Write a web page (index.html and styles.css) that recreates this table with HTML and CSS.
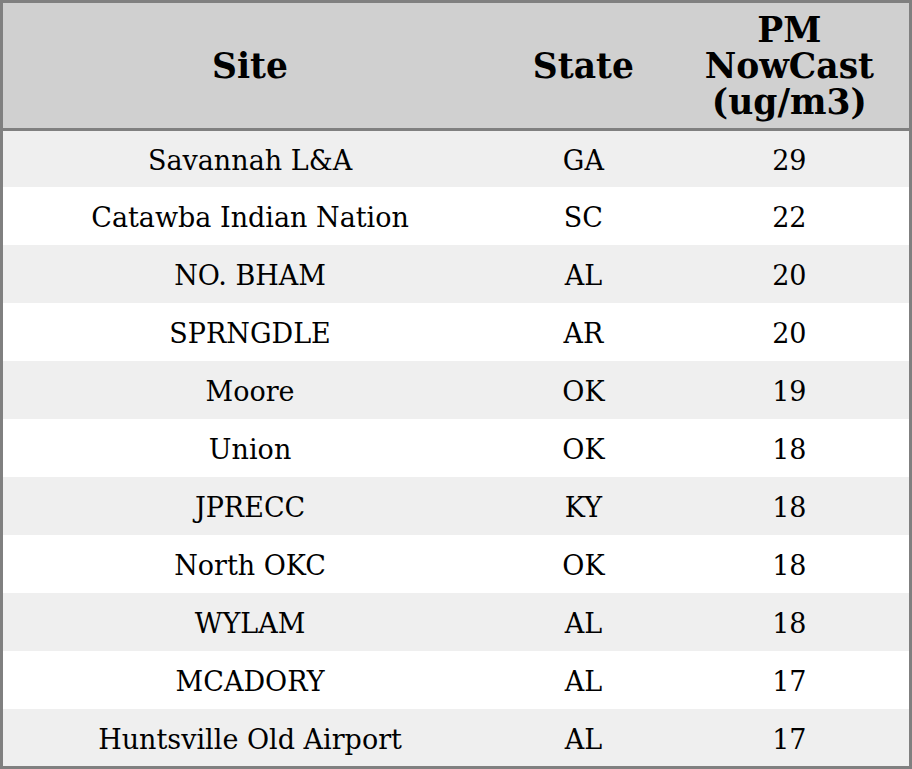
FILE: index.html
```html
<!DOCTYPE html>
<html>
<head>
<meta charset="utf-8">
<link rel="stylesheet" href="styles.css">
</head>
<body>
<table class="aq">
  <colgroup>
    <col class="c-site">
    <col class="c-state">
    <col class="c-pm">
  </colgroup>
  <thead>
    <tr><th>Site</th><th>State</th><th>PM NowCast (ug/m3)</th></tr>
  </thead>
  <tbody>
    <tr><td>Savannah L&amp;A</td><td>GA</td><td>29</td></tr>
    <tr><td>Catawba Indian Nation</td><td>SC</td><td>22</td></tr>
    <tr><td>NO. BHAM</td><td>AL</td><td>20</td></tr>
    <tr><td>SPRNGDLE</td><td>AR</td><td>20</td></tr>
    <tr><td>Moore</td><td>OK</td><td>19</td></tr>
    <tr><td>Union</td><td>OK</td><td>18</td></tr>
    <tr><td>JPRECC</td><td>KY</td><td>18</td></tr>
    <tr><td>North OKC</td><td>OK</td><td>18</td></tr>
    <tr><td>WYLAM</td><td>AL</td><td>18</td></tr>
    <tr><td>MCADORY</td><td>AL</td><td>17</td></tr>
    <tr><td>Huntsville Old Airport</td><td>AL</td><td>17</td></tr>
  </tbody>
</table>
</body>
</html>
```
FILE: styles.css
```css
html, body {
  margin: 0;
  padding: 0;
  background: #ffffff;
}
.aq {
  width: 912px;
  border-collapse: collapse;
  border: 3px solid #808080;
  font-family: "DejaVu Serif", serif;
  color: #000;
  table-layout: fixed;
}
.c-site { width: 494px; }
.c-state { width: 172px; }
.c-pm { width: 240px; }
.aq th {
  background: #d0d0d0;
  font-weight: bold;
  font-size: 34.5px;
  line-height: 36px;
  height: 125px;
  padding: 0;
  text-align: center;
  vertical-align: middle;
  border-bottom: 3px solid #808080;
}
.aq th:last-child {
  padding: 0 8px;
}
.aq td {
  font-size: 27px;
  line-height: 30px;
  height: 54px;
  padding: 4px 0 0;
  text-align: center;
  vertical-align: middle;
}
.aq tbody tr:first-child td {
  height: 52px;
}
.aq tbody tr:last-child td {
  height: 53px;
}
.aq tbody tr:nth-child(odd) td {
  background: #efefef;
}
```
